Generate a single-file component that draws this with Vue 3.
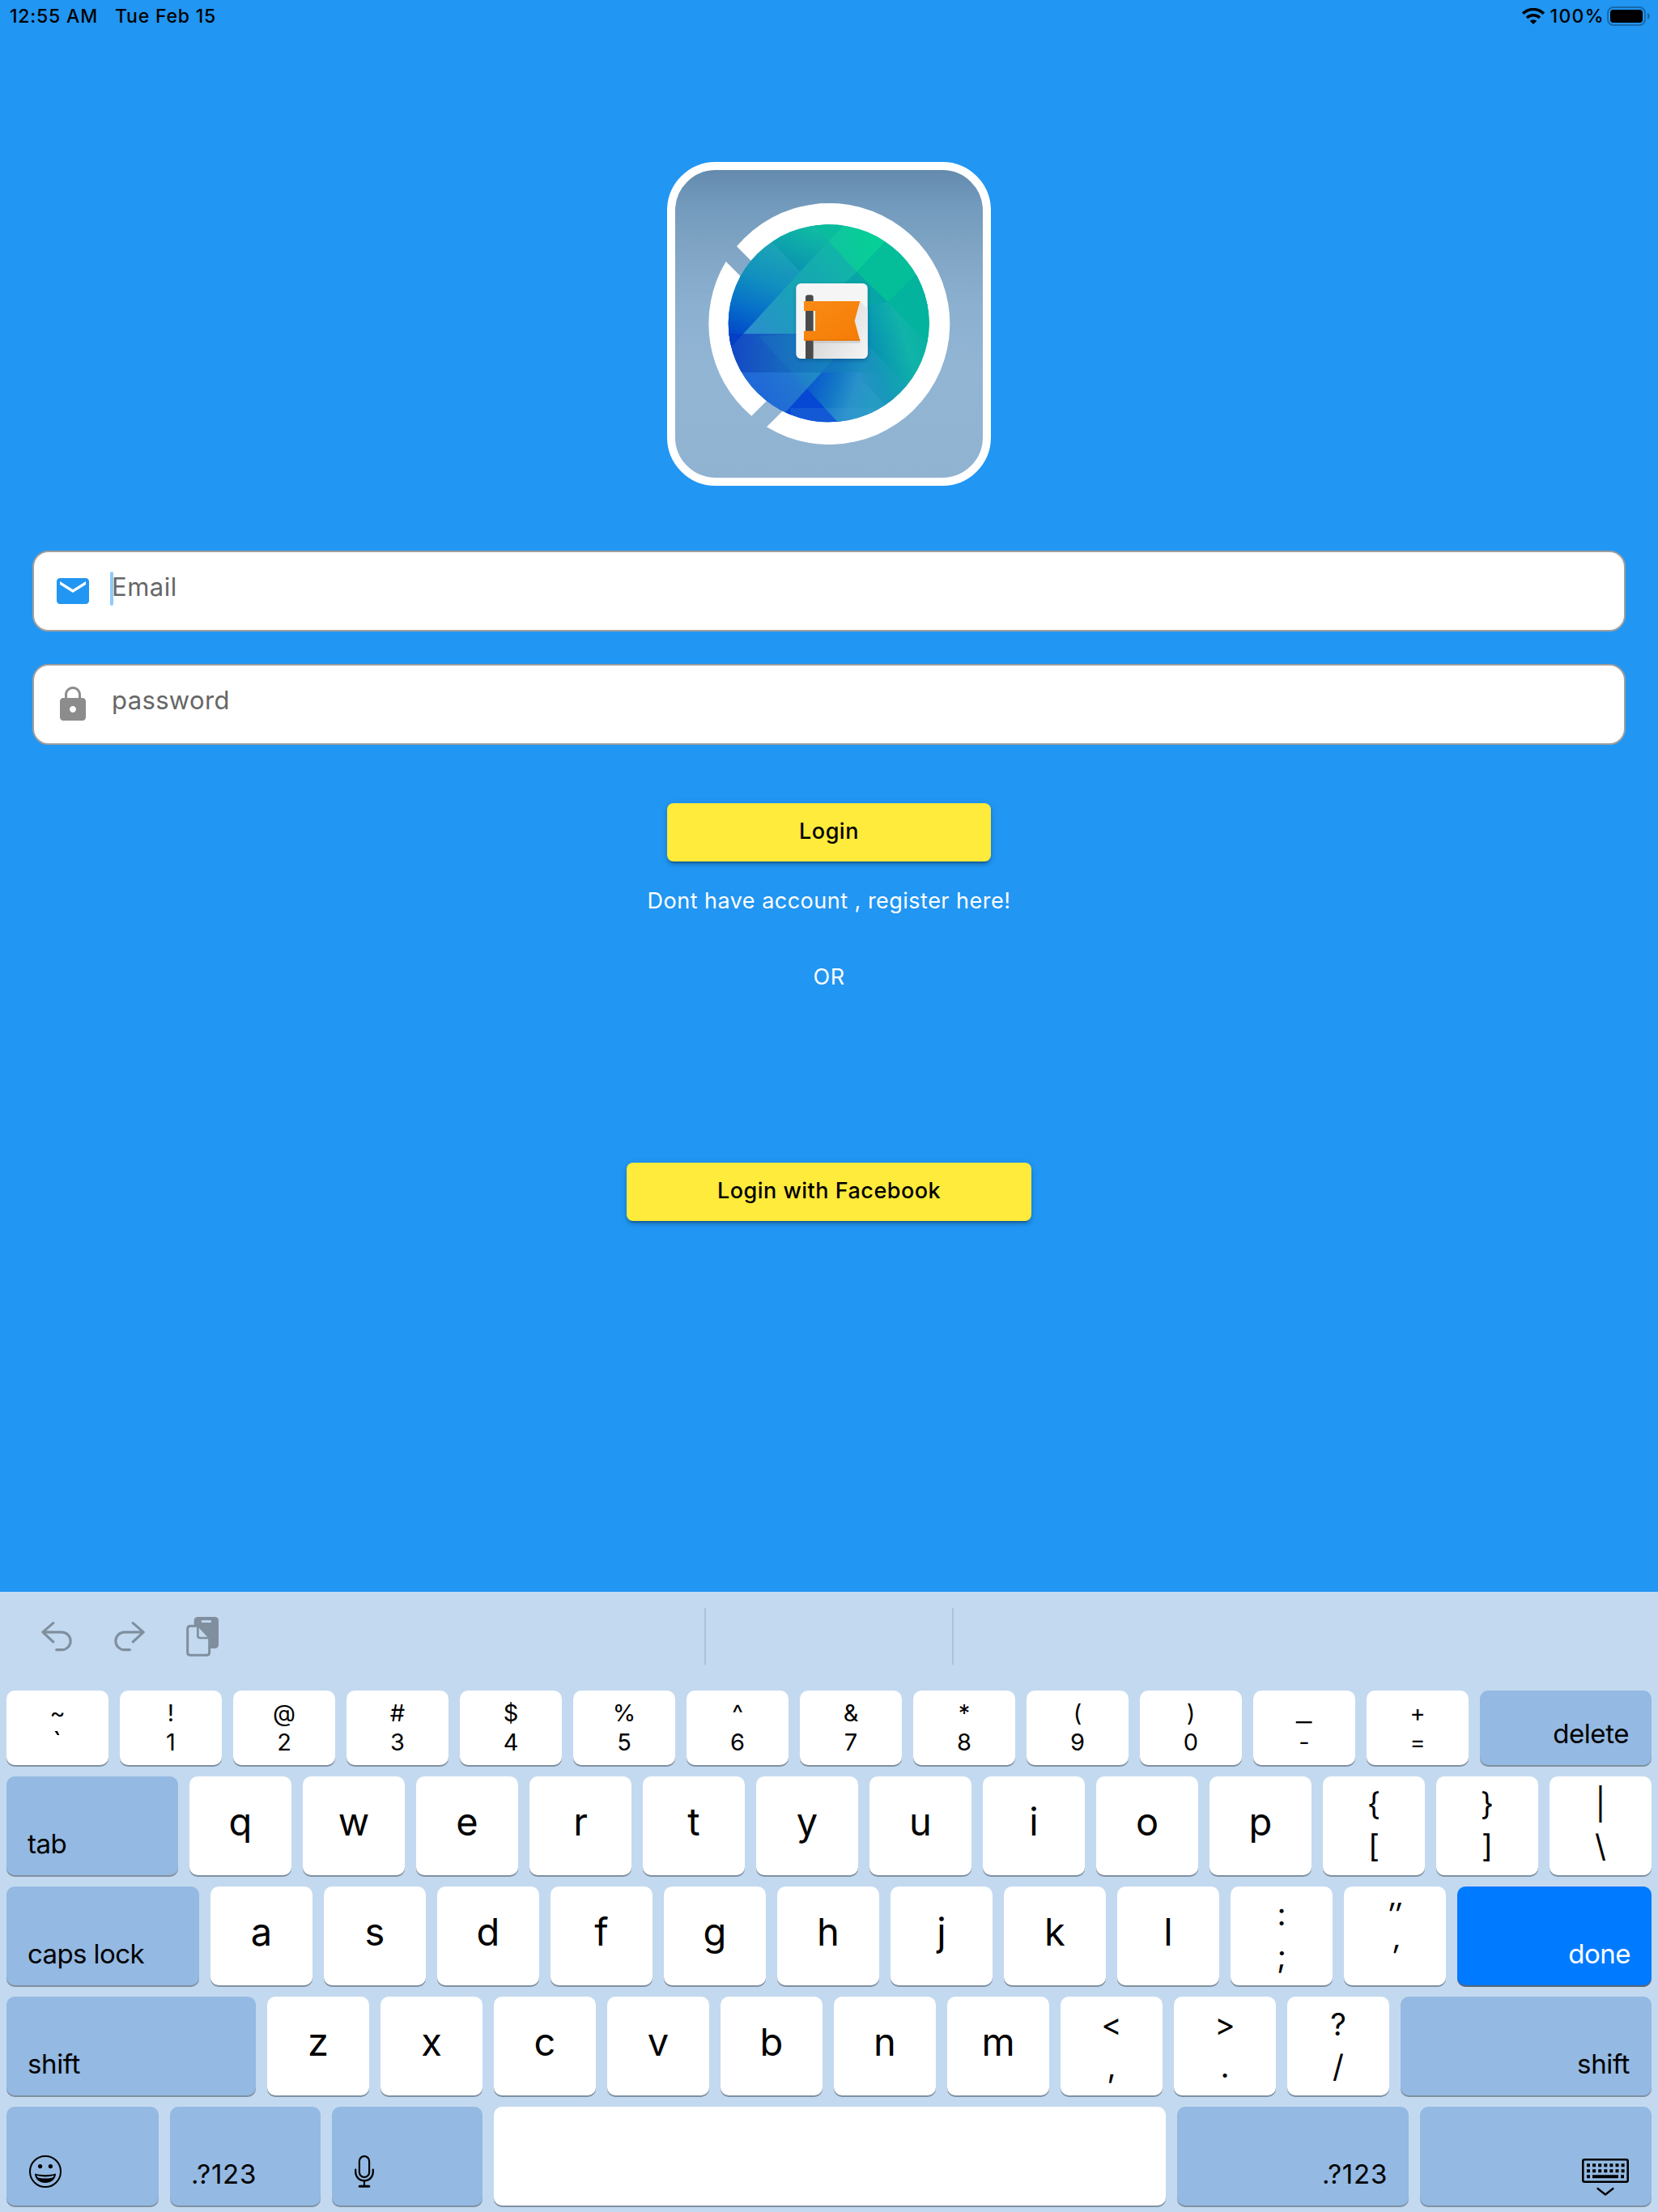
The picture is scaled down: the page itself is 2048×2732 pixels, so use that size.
<script setup>
const dual = (upper, lower) => ({ type: 'dual', upper, lower })
const letters = (s) => s.split('').map((label) => ({ type: 'letter', label }))
const fn = (label, width, side = 'left', extra = {}) => ({ type: 'fn', label, width, side, ...extra })

const rows = [
  {
    name: 'numbers',
    keys: [
      ['~', '`'], ['!', '1'], ['@', '2'], ['#', '3'], ['$', '4'], ['%', '5'], ['^', '6'],
      ['&', '7'], ['*', '8'], ['(', '9'], [')', '0'], ['_', '-'], ['+', '=']
    ].map(([u, l]) => dual(u, l)).concat(fn('delete', 212, 'right', { spacing: -0.43, pad: 28 }))
  },
  {
    name: 'top',
    keys: [fn('tab', 212, 'left', { spacing: -0.49 }), ...letters('qwertyuiop'), dual('{', '['), dual('}', ']'), dual('|', '\\')]
  },
  {
    name: 'home',
    keys: [
      fn('caps lock', 238, 'left', { spacing: -0.6 }), ...letters('asdfghjkl'), dual(':', ';'),
      { ...dual('″', '′'), slanted: true },
      fn('done', 240, 'right', { primary: true, spacing: -0.5 })
    ]
  },
  {
    name: 'bottom',
    keys: [
      fn('shift', 308, 'left', { spacing: -0.38 }), ...letters('zxcvbnm'), dual('<', ','), dual('>', '.'), dual('?', '/'),
      fn('shift', 310, 'right', { spacing: -0.38, pad: 27 })
    ]
  },
  {
    name: 'space',
    keys: [
      fn('', 188, 'left', { icon: 'emoji' }),
      fn('.?123', 186, 'left', { spacing: 0.74 }),
      fn('', 186, 'left', { icon: 'mic' }),
      { type: 'space', width: 830 },
      fn('.?123', 286, 'right', { spacing: 0.74 }),
      fn('', 286, 'right', { icon: 'keyboard' })
    ]
  }
]

const keyStyle = (key) => ({
  width: key.width ? key.width + 'px' : undefined,
  paddingRight: key.pad ? key.pad + 'px' : undefined
})
</script>

<template>
  <div class="screen">
    <header class="status">
      <span class="time">12:55 AM</span>
      <span class="date">Tue Feb 15</span>
      <span class="grow"></span>
      <svg class="wifi" viewBox="0 0 84 60">
        <g fill="none" stroke="#000" stroke-width="10.5">
          <path d="M3.500 20.500A54.500 54.500 0 0 1 80.500 20.500" />
          <path d="M18 36A35 35 0 0 1 66 36" />
        </g>
        <path d="M42 60L29 47.500A20 20 0 0 1 55 47.500Z" fill="#000" />
      </svg>
      <span class="percent">100%</span>
      <svg class="battery" viewBox="0 0 54 24">
        <rect x="1" y="1" width="46" height="22" rx="7" fill="none" stroke="#176aad" stroke-width="2" />
        <rect x="4" y="4" width="40" height="16" rx="4" fill="#000" />
        <path d="M50 8c4 1.200 4 6.800 0 8z" fill="#176aad" />
      </svg>
    </header>

    <main class="content">
      <div class="logo">
        <svg viewBox="72 60 1140 1140">
          <defs>
            <linearGradient id="base" gradientUnits="userSpaceOnUse" x1="400" y1="900" x2="880" y2="330">
              <stop offset="0" stop-color="#1c62d4" />
              <stop offset=".45" stop-color="#1595b8" />
              <stop offset=".75" stop-color="#0bb2a3" />
              <stop offset="1" stop-color="#02c298" />
            </linearGradient>
            <linearGradient id="west" gradientUnits="userSpaceOnUse" x1="430" y1="340" x2="300" y2="700">
              <stop offset="0" stop-color="#1ba4b6" />
              <stop offset=".35" stop-color="#118fbf" />
              <stop offset=".65" stop-color="#066fca" />
              <stop offset="1" stop-color="#033fc8" />
            </linearGradient>
            <linearGradient id="northwest" gradientUnits="userSpaceOnUse" x1="600" y1="270" x2="530" y2="430">
              <stop offset="0" stop-color="#10bda2" />
              <stop offset="1" stop-color="#0b94b1" />
            </linearGradient>
            <linearGradient id="north" gradientUnits="userSpaceOnUse" x1="640" y1="330" x2="800" y2="290">
              <stop offset="0" stop-color="#10c39f" />
              <stop offset="1" stop-color="#06cf97" />
            </linearGradient>
            <linearGradient id="center" gradientUnits="userSpaceOnUse" x1="700" y1="350" x2="370" y2="680">
              <stop offset="0" stop-color="#10b7a6" />
              <stop offset=".5" stop-color="#17a3b5" />
              <stop offset="1" stop-color="#2a8fcc" />
            </linearGradient>
            <linearGradient id="band" gradientUnits="userSpaceOnUse" x1="280" y1="0" x2="900" y2="0">
              <stop offset="0" stop-color="#1448c5" />
              <stop offset=".3" stop-color="#1766bf" />
              <stop offset=".55" stop-color="#1477bc" stop-opacity=".8" />
              <stop offset="1" stop-color="#0d9eb0" stop-opacity="0" />
            </linearGradient>
            <linearGradient id="east" gradientUnits="userSpaceOnUse" x1="770" y1="660" x2="960" y2="600">
              <stop offset="0" stop-color="#0690b3" />
              <stop offset=".7" stop-color="#11b3a9" />
              <stop offset="1" stop-color="#0ab3a3" />
            </linearGradient>
            <linearGradient id="south" gradientUnits="userSpaceOnUse" x1="560" y1="850" x2="800" y2="930">
              <stop offset="0" stop-color="#0a55cf" />
              <stop offset=".4" stop-color="#1377c7" />
              <stop offset=".7" stop-color="#2a92ca" />
              <stop offset="1" stop-color="#259bc2" />
            </linearGradient>
            <linearGradient id="southeast" gradientUnits="userSpaceOnUse" x1="740" y1="800" x2="920" y2="740">
              <stop offset="0" stop-color="#0d83bb" stop-opacity="0" />
              <stop offset=".6" stop-color="#139fb5" />
              <stop offset="1" stop-color="#12a5b0" />
            </linearGradient>
            <linearGradient id="southwest" gradientUnits="userSpaceOnUse" x1="400" y1="900" x2="600" y2="780">
              <stop offset="0" stop-color="#1f69d8" />
              <stop offset=".5" stop-color="#2275d0" />
              <stop offset="1" stop-color="#1f8dc4" />
            </linearGradient>
            <linearGradient id="flag" x1="0" y1="0" x2="1" y2="1">
              <stop offset="0" stop-color="#f98b15" />
              <stop offset="1" stop-color="#f57c05" />
            </linearGradient>
            <linearGradient id="fold" gradientUnits="userSpaceOnUse" x1="600" y1="660" x2="780" y2="760">
              <stop offset="0" stop-color="#d9d9d9" />
              <stop offset="1" stop-color="#f4f4f4" />
            </linearGradient>
            <clipPath id="disc"><ellipse cx="641" cy="628" rx="372" ry="366" /></clipPath>
            <clipPath id="tile"><rect x="520" y="480" width="265" height="279" rx="18" /></clipPath>
            <filter id="soft" x="-20%" y="-20%" width="140%" height="150%">
              <feDropShadow dx="0" dy="7" stdDeviation="7" flood-color="#043b66" flood-opacity=".4" />
            </filter>
          </defs>
          <path
            d="M300 343A447 447 0 1 1 411 1012L470 953L640 980L960 800L960 450L760 300L353 396ZM260 399L313 452L330 700L412 914L355 971A447 447 0 0 1 260 399Z"
            fill="#fff"
          />
          <g clip-path="url(#disc)">
            <rect x="260" y="250" width="770" height="760" fill="url(#base)" />
            <path d="M260 250H360L535 437L325 667L280 715L260 730Z" fill="url(#west)" />
            <path d="M360 250H570L640 325L535 437Z" fill="url(#northwest)" />
            <path d="M570 250H710L640 325Z" fill="#0bbb9e" />
            <path d="M710 250H920L745 437L640 325Z" fill="url(#north)" />
            <path d="M920 250H1030V715L745 437Z" fill="#03be99" />
            <path d="M640 325L745 437L655 765H230L325 667L535 437Z" fill="url(#center)" />
            <path d="M745 437L860 550L700 720V480Z" fill="#07a5a6" />
            <path d="M860 550L960 450L1030 380V730L1005 705Z" fill="#04b39d" />
            <path d="M860 550L1020 715L990 900L925 855L720 645L790 560Z" fill="url(#east)" />
            <path d="M720 640L925 855L800 1010H670L560 870L655 765Z" fill="url(#south)" />
            <path d="M720 640L960 890L880 960L700 770Z" fill="url(#southeast)" />
            <path d="M260 810H615L560 870L485 955L420 1000L260 830Z" fill="url(#southwest)" />
            <path d="M260 667H900V810H260Z" fill="url(#band)" />
            <path d="M325 667L280 715L262 667Z" fill="#0340c6" />
            <path d="M560 870L680 1000V1020H425Z" fill="#0648d3" />
            <path d="M500 942H850V1010H500Z" fill="#4ba0e0" opacity=".2" />
            <path d="M380 675L560 870L655 765L620 667Z" fill="#1c8fc4" opacity=".2" />
          </g>
          <rect x="520" y="480" width="265" height="279" rx="18" fill="#f5f5f5" filter="url(#soft)" />
          <g clip-path="url(#tile)">
            <path d="M757 547L800 590V780H608L583 752V690H757L737 619Z" fill="url(#fold)" />
            <path d="M555 532q0-9 9-9h11q9 0 9 9V770H555Z" fill="#4a4a4a" />
            <path d="M584 692H757V701H584Z" fill="#bbb" opacity=".55" />
            <path d="M549 546H757L737 619L757 692H549V656H591V582H549Z" fill="url(#flag)" />
            <path d="M549 690H757" stroke="#dc6d03" stroke-width="3" />
          </g>
        </svg>
      </div>

      <form class="fields" @submit.prevent>
        <div class="field">
          <svg class="field-icon" viewBox="0 0 24 24" fill="#2196f3">
            <path d="M20 4H4c-1.100 0-1.990.9-1.990 2L2 18c0 1.100.9 2 2 2h16c1.100 0 2-.9 2-2V6c0-1.100-.9-2-2-2zm0 4l-8 5-8-5V6l8 5 8-5v2z" />
          </svg>
          <span class="caret"></span>
          <span class="hint email">Email</span>
        </div>
        <div class="field">
          <svg class="field-icon" viewBox="0 0 24 24" fill="#8c8c8c">
            <path d="M18 8h-1V6c0-2.760-2.240-5-5-5S7 3.240 7 6v2H6c-1.100 0-2 .9-2 2v10c0 1.100.9 2 2 2h12c1.100 0 2-.9 2-2V10c0-1.100-.9-2-2-2zm-6 9c-1.100 0-2-.9-2-2s.9-2 2-2 2 .9 2 2-.9 2-2 2zM8.500 8V6c0-1.930 1.570-3.500 3.500-3.500s3.500 1.570 3.500 3.500v2z" />
          </svg>
          <span class="caret off"></span>
          <span class="hint">password</span>
        </div>
      </form>

      <button class="btn login">Login</button>
      <p class="register">Dont have account , register here!</p>
      <p class="or">OR</p>
      <button class="btn facebook">Login with Facebook</button>
    </main>

    <section class="keyboard">
      <div class="toolbar">
        <svg class="tool undo" viewBox="0 0 114 112">
          <path d="M44 5L5 39L44 75M8 39H76A31 31 0 0 1 76 105H56" />
        </svg>
        <svg class="tool redo" viewBox="0 0 114 112">
          <path d="M70 5L109 39L70 75M106 39H38A31 31 0 0 0 38 105H58" />
        </svg>
        <svg class="paste" viewBox="0 0 120 147">
          <rect x="29" y="0" width="91" height="117" rx="14" fill="#7f8f9e" />
          <rect x="56" y="13" width="37" height="8" rx="3" fill="#c3d9f0" />
          <path d="M16 34H47L86 76V131q0 11-11 11H16q-11 0-11-11V45q0-11 11-11Z" fill="#c3d9f0" stroke="#7f8f9e" stroke-width="9" />
          <path d="M43 36V70q0 8 8 8H84" fill="none" stroke="#7f8f9e" stroke-width="8" />
        </svg>
        <i class="divider first"></i>
        <i class="divider second"></i>
      </div>

      <div class="keys">
        <div v-for="row in rows" :key="row.name" class="row" :class="row.name">
          <div
            v-for="(key, i) in row.keys"
            :key="i"
            class="key"
            :class="[key.type, key.side, { primary: key.primary, slanted: key.slanted }]"
            :style="keyStyle(key)"
          >
            <template v-if="key.type === 'dual'">
              <span :class="{ wide: key.upper === '_' }">{{ key.upper }}</span>
              <span :class="{ grave: key.lower === '`' }">{{ key.lower }}</span>
            </template>
            <svg v-else-if="key.icon === 'emoji'" class="emoji" viewBox="0 0 40 40">
              <circle cx="20" cy="20" r="19" fill="none" stroke="#000" stroke-width="2" />
              <circle cx="13.600" cy="13.600" r="2.600" />
              <circle cx="26.400" cy="13.600" r="2.600" />
              <path d="M7 22.500C13 24.800 27 24.800 33 22.500C33 29.500 27 34 20 34S7 29.500 7 22.500Z" />
              <path d="M9.500 24.800C15 27 25 27 30.500 24.800L29.800 27C25 29 15 29 10.200 27Z" fill="#94b9e2" />
            </svg>
            <svg v-else-if="key.icon === 'mic'" class="mic" viewBox="0 0 24 40">
              <g fill="none" stroke="#000" stroke-width="2.200" stroke-linecap="round">
                <rect x="5.900" y="1.100" width="12.200" height="26" rx="6.100" />
                <path d="M1.200 17.500V20.500C1.200 27 6 31.300 12 31.300S22.800 27 22.800 20.500V17.500M12 31.500V38" />
                <path d="M6.300 38.300H17.700" stroke-width="3" />
              </g>
            </svg>
            <svg v-else-if="key.icon === 'keyboard'" class="hide" viewBox="0 0 58 46">
              <rect x="1.300" y="1.300" width="55.400" height="27.400" rx="2" fill="none" stroke="#000" stroke-width="2.600" />
              <path d="M6 8.300H53M6 15.300H53" stroke="#000" stroke-width="4" stroke-dasharray="4 3.100" />
              <path d="M6 22.300H10M13 22.300H45M48 22.300H52" stroke="#000" stroke-width="4" />
              <path d="M19.500 37L29 44.500L38.500 37" fill="none" stroke="#000" stroke-width="2.300" stroke-linecap="round" stroke-linejoin="round" />
            </svg>
            <span v-else-if="key.label" :style="key.spacing ? { letterSpacing: key.spacing + 'px' } : null">{{ key.label }}</span>
          </div>
        </div>
      </div>
    </section>
  </div>
</template>

<style>
body {
  margin: 0;
}
</style>

<style scoped>
.screen {
  display: flex;
  flex-direction: column;
  width: 2048px;
  height: 2732px;
  overflow: hidden;
  background: #2196f3;
  color: #000;
  font-family: Inter, "Liberation Sans", sans-serif;
}
svg {
  display: block;
  flex: none;
}
.status {
  display: flex;
  align-items: flex-start;
  height: 40px;
  padding: 0 10px 0 12px;
  box-sizing: border-box;
  font-size: 23px;
  font-weight: 500;
  line-height: 41px;
  letter-spacing: 0.8px;
}
.date {
  margin-left: 21px;
}
.grow {
  flex: 1;
}
.wifi {
  width: 28px;
  height: 20px;
  margin: 10px 7px 0 0;
}
.percent {
  letter-spacing: 1.35px;
  margin-right: 3px;
}
.battery {
  width: 54px;
  height: 24px;
  margin: 8px -1px 0 0;
}
.content {
  display: flex;
  flex-direction: column;
  align-items: center;
  height: 1926px;
}
.logo {
  width: 380px;
  height: 380px;
  margin-top: 160px;
  border: 10px solid #fff;
  border-radius: 60px;
  overflow: hidden;
  background: linear-gradient(#648bad 0%, #739bbd 12%, #82a6c5 28%, #8cb0d0 45%, #92b5d4 65%, #90b3d2 100%);
}
.logo svg {
  width: 380px;
  height: 380px;
}
.fields {
  display: flex;
  flex-direction: column;
  gap: 40px;
  align-self: stretch;
  margin: 80px 40px 0;
}
.field {
  display: flex;
  align-items: flex-start;
  height: 100px;
  padding: 24px;
  box-sizing: border-box;
  border: 2px solid #9e9e9e;
  border-radius: 20px;
  background: #fff;
}
.field-icon {
  width: 48px;
  height: 48px;
}
.caret {
  width: 4px;
  height: 42px;
  margin-left: 22px;
  border-radius: 2px;
  background: #90caf9;
}
.caret.off {
  background: transparent;
}
.hint {
  margin-left: -2px;
  color: #666;
  font-size: 31px;
  line-height: 38px;
  letter-spacing: 0.36px;
}
.hint.email {
  letter-spacing: 0.5px;
}
.btn {
  height: 72px;
  padding: 0;
  border: 0;
  border-radius: 8px;
  background: #ffeb3b;
  box-shadow: 0 6px 2px -4px rgba(0, 0, 0, 0.2), 0 4px 4px rgba(0, 0, 0, 0.14), 0 2px 10px rgba(0, 0, 0, 0.12);
  color: #000;
  font: 500 27px/70px Inter, "Liberation Sans", sans-serif;
  letter-spacing: 0.49px;
  display: flex;
  justify-content: center;
  align-items: flex-start;
}
.login {
  width: 400px;
  margin-top: 72px;
}
.register,
.or {
  margin: 0;
  color: #fff;
  font-size: 27px;
  font-weight: 400;
  line-height: 36px;
  letter-spacing: 0.48px;
}
.register {
  margin-top: 31px;
}
.or {
  margin-top: 58px;
}
.facebook {
  width: 500px;
  margin-top: 211px;
}
.keyboard {
  flex: 1;
  background: #c3d9f0;
}
.toolbar {
  display: flex;
  align-items: flex-start;
  height: 122px;
  padding: 0 0 0 51px;
  box-sizing: border-box;
}
.tool {
  width: 38px;
  height: 37px;
  margin-top: 36.500px;
  fill: none;
  stroke: #7f8f9e;
  stroke-width: 9.500;
  stroke-linecap: round;
  stroke-linejoin: round;
}
.redo {
  margin-left: 52px;
}
.paste {
  width: 40px;
  height: 49px;
  margin: 31px 0 0 51px;
}
.divider {
  width: 2px;
  height: 70px;
  margin-top: 20px;
  background: #adc1d6;
}
.divider.first {
  margin-left: 600px;
}
.divider.second {
  margin-left: 304px;
}
.keys {
  display: flex;
  flex-direction: column;
  gap: 14px;
  padding: 0 8px;
}
.row {
  display: flex;
  gap: 14px;
}
.key {
  display: flex;
  flex: none;
  width: 126px;
  height: 122px;
  box-sizing: border-box;
  border-radius: 10px;
  background: #fff;
  box-shadow: 0 2px 0 #8090a0;
}
.numbers .key {
  height: 92px;
}
.letter {
  justify-content: center;
  font-size: 47px;
  line-height: 112px;
}
.dual {
  flex-direction: column;
  align-items: center;
  padding-top: 7.750px;
  font-size: 38.500px;
  line-height: 52.500px;
}
.dual.slanted span {
  transform: skewX(-8deg);
}
.numbers .dual {
  padding-top: 9.500px;
  font-size: 29px;
  line-height: 36.500px;
}
.wide {
  transform: scaleX(1.5);
}
.grave {
  transform: scale(1.2);
}
.fn {
  align-items: flex-end;
  padding: 0 27px 19.500px;
  background: #94b9e2;
  font-size: 33px;
  line-height: 40px;
}
.fn.left {
  padding-left: 26px;
}
.fn.right {
  justify-content: flex-end;
  padding-right: 26px;
}
.fn.primary {
  background: #007aff;
  box-shadow: 0 2px 0 #59677a;
  color: #fff;
}
.emoji {
  width: 40px;
  height: 40px;
  margin: 0 0 2.500px 2px;
}
.mic {
  width: 24px;
  height: 40px;
  margin: 0 0 2.500px 2px;
}
.hide {
  width: 58px;
  height: 46px;
  margin: 0 2px -7.500px 0;
}
</style>
